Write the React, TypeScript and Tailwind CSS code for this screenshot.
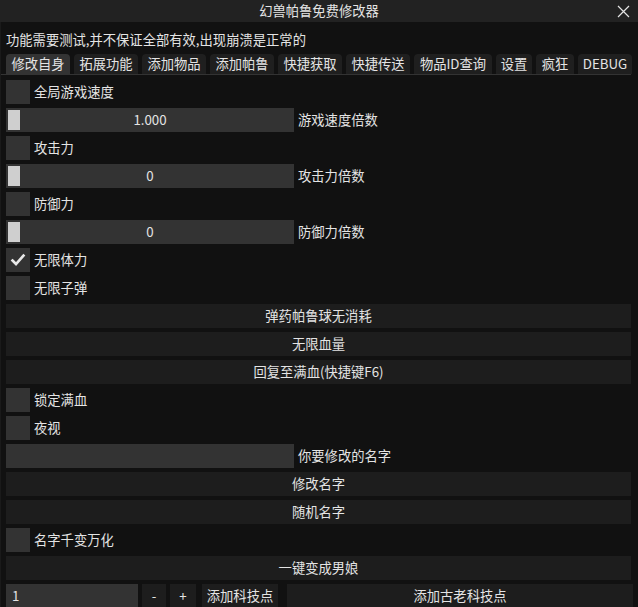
import React from 'react'

const tabs: [string, string][] = [
  ['修改自身', 'w-[64px]'],
  ['拓展功能', 'w-[64px]'],
  ['添加物品', 'w-[64px]'],
  ['添加帕鲁', 'w-[64px]'],
  ['快捷获取', 'w-[64px]'],
  ['快捷传送', 'w-[64px]'],
  ['物品ID查询', 'w-[78px]'],
  ['设置', 'w-[36px]'],
  ['疯狂', 'w-[38px]'],
  ['DEBUG', 'w-[54px]'],
]

function Check({ label, checked = false }: { label: string; checked?: boolean }) {
  return (
    <div className="flex h-[24px] items-center gap-[4px]">
      <div className="flex h-[24px] w-[24px] items-center justify-center bg-[#333333]">
        {checked && (
          <svg width="16" height="16" viewBox="0 0 16 16">
            <polyline points="2.5,8.5 6,12 13.5,3.5" fill="none" stroke="#e8e8e8" strokeWidth="2.6" strokeLinecap="square" />
          </svg>
        )}
      </div>
      <span>{label}</span>
    </div>
  )
}

function Slider({ value, label }: { value: string; label: string }) {
  return (
    <div className="flex h-[24px] items-center gap-[4px]">
      <div className="relative flex h-[24px] w-[288px] items-center justify-center bg-[#333333]">
        <div className="absolute left-[2px] top-[2px] h-[20px] w-[12px] bg-[#cfcfcf]" />
        <span>{value}</span>
      </div>
      <span>{label}</span>
    </div>
  )
}

function Button({ label }: { label: string }) {
  return <div className="flex h-[24px] items-center justify-center bg-[#1d1d1d]">{label}</div>
}

export default function App() {
  return (
    <div className="flex h-[607px] w-[638px] flex-col overflow-hidden bg-[#111111] font-['Noto_Sans_CJK_SC',sans-serif] text-[13.3px] leading-[20px] text-[#e4e4e4]">
      <div className="grid h-[22px] shrink-0 grid-cols-[1fr_auto_1fr] items-center bg-[#222222]">
        <div />
        <span>幻兽帕鲁免费修改器</span>
        <div className="flex justify-end pr-[8px]">
          <svg width="13" height="13" viewBox="0 0 13 13">
            <path d="M1 1 L12 12 M12 1 L1 12" stroke="#e4e4e4" strokeWidth="1.2" />
          </svg>
        </div>
      </div>

      <div className="flex flex-col border-l border-[#1a1a1a] pl-[5px] pr-[7px]">
        <div className="whitespace-nowrap pt-[8px] pb-[4px]">功能需要测试,并不保证全部有效,出现崩溃是正常的</div>

        <div className="flex h-[20px] gap-[4px]">
          {tabs.map(([t, w], i) => (
            <div
              key={t}
              className={
                (i === 0 ? 'bg-[#333333] ' : 'bg-[#1f1f1f] ') +
                w +
                ' flex shrink-0 items-center justify-center whitespace-nowrap rounded-t-[4px]'
              }
            >
              {t}
            </div>
          ))}
        </div>
        <div className="-ml-[5px] h-[1px] bg-[#333333]" />

        <div className="flex flex-col gap-[4px] pt-[5px]">
          <Check label="全局游戏速度" />
          <Slider value="1.000" label="游戏速度倍数" />
          <Check label="攻击力" />
          <Slider value="0" label="攻击力倍数" />
          <Check label="防御力" />
          <Slider value="0" label="防御力倍数" />
          <Check label="无限体力" checked />
          <Check label="无限子弹" />
          <Button label="弹药帕鲁球无消耗" />
          <Button label="无限血量" />
          <Button label="回复至满血(快捷键F6)" />
          <Check label="锁定满血" />
          <Check label="夜视" />
          <div className="flex h-[24px] items-center gap-[4px]">
            <div className="h-[24px] w-[288px] bg-[#333333]" />
            <span>你要修改的名字</span>
          </div>
          <Button label="修改名字" />
          <Button label="随机名字" />
          <Check label="名字千变万化" />
          <Button label="一键变成男娘" />
          <div className="-mr-[2px] flex h-[24px] items-center">
            <div className="flex h-[24px] w-[132px] items-center bg-[#333333] pl-[6px]">1</div>
            <div className="ml-[4px] flex h-[24px] w-[24px] items-center justify-center bg-[#1d1d1d]">-</div>
            <div className="ml-[4px] flex h-[24px] w-[26px] items-center justify-center bg-[#1d1d1d]">+</div>
            <div className="ml-[6px] flex h-[24px] w-[76px] items-center justify-center bg-[#1d1d1d]">添加科技点</div>
            <div className="ml-[9px] flex h-[24px] flex-1 items-center justify-center bg-[#1d1d1d]">添加古老科技点</div>
          </div>
        </div>
      </div>
    </div>
  )
}
